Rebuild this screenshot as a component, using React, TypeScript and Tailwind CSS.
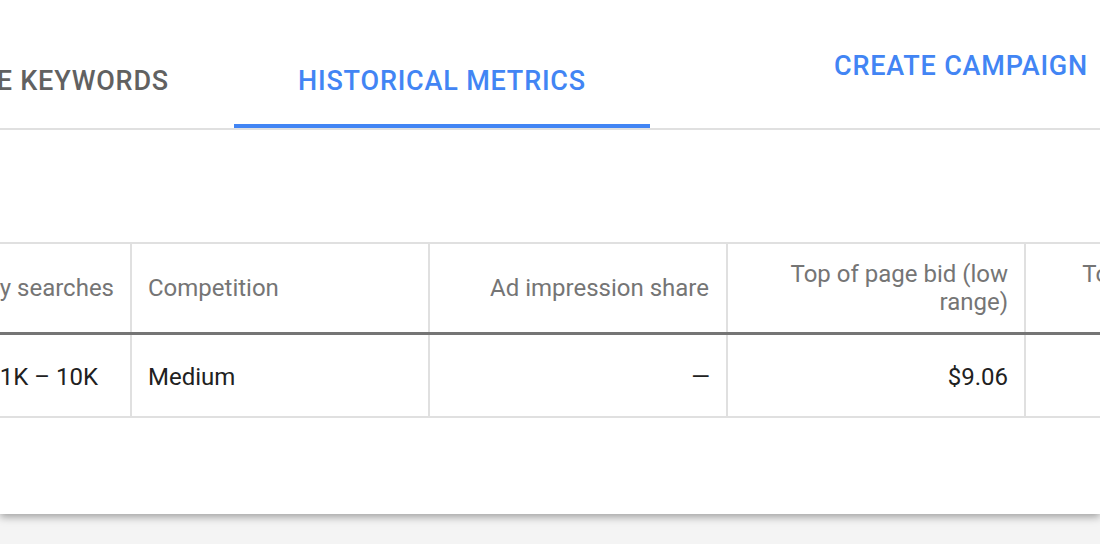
const tabs = [
  { label: "NEGATIVE KEYWORDS", active: false },
  { label: "HISTORICAL METRICS", active: true },
];

const App = () => {
  return (
    <div className="h-[544px] overflow-hidden bg-[#f4f4f4] font-['Roboto',sans-serif]">
      <div className="h-[514px] overflow-hidden bg-white shadow-[0_3px_8px_rgba(0,0,0,0.35)]">
        {/* tab bar */}
        <div className="flex h-[130px] items-end border-b-2 border-[#e0e0e0]">
          <div className="flex w-[234px] shrink-0 justify-end pr-[65px]">
            <div className="flex flex-col">
              <span className="whitespace-nowrap text-[27px] font-medium leading-[30px] tracking-[0.8px] text-[#616161]">
                {tabs[0].label}
              </span>
              <div className="mt-[28px] h-[4px]" />
            </div>
          </div>
          <div className="flex w-[416px] shrink-0 flex-col items-center">
            <span className="whitespace-nowrap text-[27px] font-medium leading-[30px] tracking-[0.8px] text-[#4285f4]">
              {tabs[1].label}
            </span>
            <div className="mt-[28px] h-[4px] w-full bg-[#4285f4]" />
          </div>
          <button className="mb-auto ml-auto mr-[12px] mt-[51px] whitespace-nowrap text-[27px] font-medium leading-[30px] tracking-[0.8px] text-[#4285f4]">
            CREATE CAMPAIGN
          </button>
        </div>

        {/* table */}
        <div className="mt-[112px] overflow-hidden border-y-2 border-[#e0e0e0] text-[24px] leading-[28px]">
          <div className="grid h-[91px] grid-cols-[132px_298px_298px_298px_298px] border-b-[3px] border-[#757575] text-[#757575]">
            <div className="flex items-center justify-end border-r-2 border-[#e0e0e0] pr-[16px]">
              <span className="whitespace-nowrap">Avg. monthly searches</span>
            </div>
            <div className="flex items-center border-r-2 border-[#e0e0e0] pl-[16px]">
              Competition
            </div>
            <div className="flex items-center justify-end border-r-2 border-[#e0e0e0] pr-[17px] text-right">
              Ad impression share
            </div>
            <div className="flex items-center justify-end border-r-2 border-[#e0e0e0] px-[16px] text-right">
              Top of page bid (low range)
            </div>
            <div className="flex items-center justify-end px-[16px] text-right">
              Top of page bid (high range)
            </div>
          </div>
          <div className="grid h-[81px] grid-cols-[132px_298px_298px_298px_298px] text-[#212121]">
            <div className="flex items-center justify-end border-r-2 border-[#e0e0e0] pr-[32px] pt-[2px]">
              <span className="whitespace-nowrap">1K – 10K</span>
            </div>
            <div className="flex items-center border-r-2 border-[#e0e0e0] pl-[16px] pt-[2px]">
              Medium
            </div>
            <div className="flex items-center justify-end border-r-2 border-[#e0e0e0] pr-[16px] pt-[2px]">
              —
            </div>
            <div className="flex items-center justify-end border-r-2 border-[#e0e0e0] pr-[16px] pt-[2px]">
              $9.06
            </div>
            <div />
          </div>
        </div>
      </div>
    </div>
  );
};

export default App;
